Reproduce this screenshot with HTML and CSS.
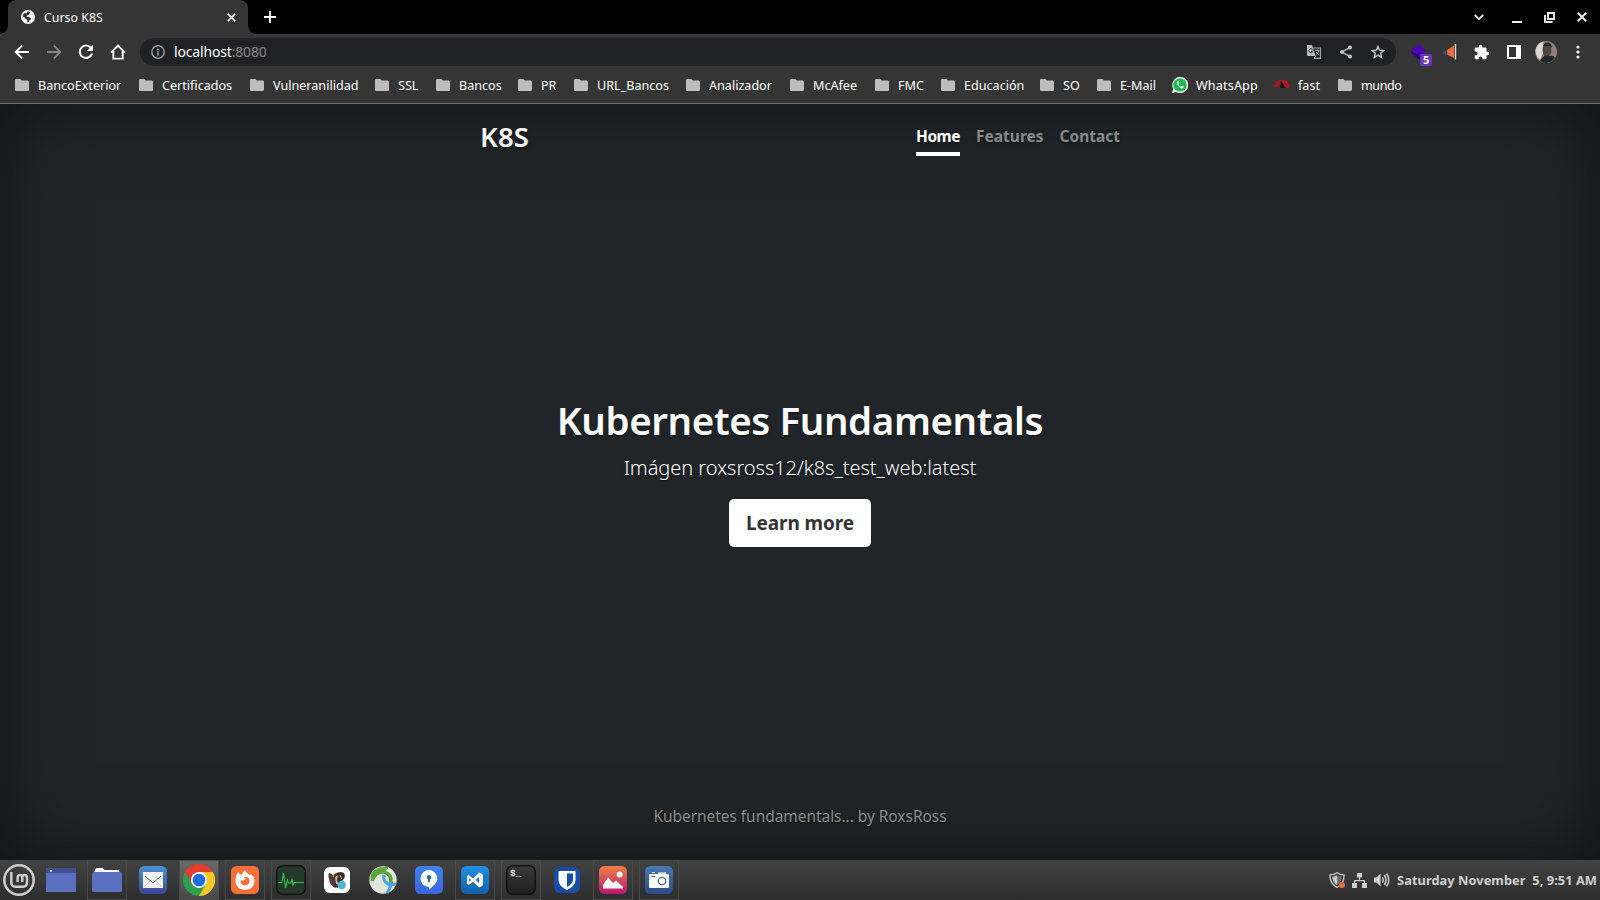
FILE: index.html
```html
<!DOCTYPE html>
<html lang="es">
<head>
<meta charset="utf-8">
<title>Curso K8S</title>
<link rel="stylesheet" href="styles.css">
</head>
<body>
<svg class="defs" width="0" height="0"><defs>
<symbol id="folder" viewBox="0 0 14 12"><path fill="#bdbdbd" d="M1.2 0H5.4L6.8 1.6H12.8Q14 1.6 14 2.8V10.8Q14 12 12.8 12H1.2Q0 12 0 10.8V1.2Q0 0 1.2 0Z"/></symbol>
<linearGradient id="g-mail" x2="0" y2="1"><stop offset="0" stop-color="#4b93cf"/><stop offset="1" stop-color="#3c4590"/></linearGradient>
<linearGradient id="g-code" x2="0" y2="1"><stop offset="0" stop-color="#2190e4"/><stop offset="1" stop-color="#1160a8"/></linearGradient>
<linearGradient id="g-img" x2="0" y2="1"><stop offset="0" stop-color="#f27f45"/><stop offset="1" stop-color="#b5176f"/></linearGradient>
<linearGradient id="g-cam" x2="0" y2="1"><stop offset="0" stop-color="#4a78b2"/><stop offset="1" stop-color="#2c4a86"/></linearGradient>
<linearGradient id="g-key" x2="0" y2="1"><stop offset="0" stop-color="#3b82f2"/><stop offset="1" stop-color="#3a66dc"/></linearGradient>
<linearGradient id="g-term" x2="0" y2="1"><stop offset="0" stop-color="#3a3a3a"/><stop offset="1" stop-color="#1f1f1f"/></linearGradient>
</defs></svg>
<div class="screen">
<header class="tabstrip">
  <div class="tab">
    <svg width="14" height="14" viewBox="0 0 14 14"><circle cx="7" cy="7" r="7" fill="#fff"/><path fill="#353535" d="M6.2 1.5Q9.600 1.200 9.400 3.200 7.600 3.400 7.600 5 5.600 5.200 5.400 6.800H8.200Q8.600 8.400 10.200 8.200 10.400 10.200 8.200 10.200 8.400 12 6.400 12.400 6 10.400 6.400 9.800 4 9.400 3.800 7.600L1.600 6.400Q2 3.400 4 2.400 4.400 3.800 5.800 3.200Z"/></svg>
    <span class="tab-title">Curso K8S</span>
    <svg width="9" height="9" viewBox="0 0 9 9"><path d="M.8.8 8.2 8.2M8.2.8.8 8.2" stroke="#eee" stroke-width="1.7"/></svg>
  </div>
  <svg class="plus" width="12" height="12" viewBox="0 0 12 12"><path d="M6 0V12M0 6H12" stroke="#fff" stroke-width="1.8"/></svg>
  <div class="wincontrols">
    <svg width="10" height="7" viewBox="0 0 10 7"><path d="M.8 1 5 5.2 9.2 1" fill="none" stroke="#eee" stroke-width="1.9"/></svg>
    <svg width="10" height="10" viewBox="0 0 10 10"><path d="M0 9H10" stroke="#eee" stroke-width="2"/></svg>
    <svg width="11" height="11" viewBox="0 0 11 11"><path d="M4 1H10V7H4ZM1 3V10H8.5" fill="none" stroke="#eee" stroke-width="1.9"/></svg>
    <svg width="10" height="10" viewBox="0 0 10 10"><path d="M.8.8 9.2 9.2M9.2.8.8 9.2" stroke="#eee" stroke-width="2"/></svg>
  </div>
</header>
<div class="toolbar">
  <div class="nav-icons">
    <svg width="16" height="16" viewBox="0 0 16 16"><path d="M15 8H2M8 1.7 1.7 8 8 14.3" fill="none" stroke="#fff" stroke-width="1.9"/></svg>
    <svg width="16" height="16" viewBox="0 0 16 16"><path d="M1 8H14M8 1.7 14.3 8 8 14.3" fill="none" stroke="#868686" stroke-width="1.9"/></svg>
    <svg width="16" height="16" viewBox="0 0 16 16"><path d="M13.6 5A6.2 6.2 0 1 0 14 9.4" fill="none" stroke="#fff" stroke-width="2"/><path d="M15 .8V7H8.8Z" fill="#fff"/></svg>
    <svg width="16" height="16" viewBox="0 0 16 16"><path d="M1 8.6 8 1.6 15 8.6M3.3 7V14.6H12.7V7" fill="none" stroke="#fff" stroke-width="1.9"/></svg>
  </div>
  <div class="omnibox">
    <svg width="14" height="14" viewBox="0 0 14 14"><circle cx="7" cy="7" r="6.2" fill="none" stroke="#9a9ca0" stroke-width="1.4"/><path d="M7 6.2V10.4M7 3.6V5" stroke="#9a9ca0" stroke-width="1.5"/></svg>
    <span class="url">localhost<span class="port">:8080</span></span>
    <div class="omni-actions">
      <svg width="14" height="14" viewBox="0 0 14 14"><path d="M6 3H13.4V13.4H7" fill="none" stroke="#aaa" stroke-width="1.1"/><path fill="#bbb" d="M0 0H5L8.6 11H1Q0 11 0 10Z"/><path d="M5.600 4.600A2 2 0 1 0 5.800 6.400H4" fill="none" stroke="#202124" stroke-width="1"/><path d="M8 5.500H12.600M10.400 4.300V5.500M11.800 5.800Q11 8.600 8.600 10M9 7 12.200 10.400M7 13.400 8.600 11" fill="none" stroke="#aaa" stroke-width="1"/></svg>
      <svg width="12" height="14" viewBox="0 0 12 14"><path d="M10 2.400 2 7 10 11.600" fill="none" stroke="#c4c4c4" stroke-width="1.3"/><g fill="#c4c4c4"><circle cx="10" cy="2.400" r="2"/><circle cx="2" cy="7" r="2"/><circle cx="10" cy="11.600" r="2"/></g></svg>
      <svg width="14" height="14" viewBox="0 0 14 14"><path d="M7 1.400 8.600 5.200 12.800 5.600 9.600 8.300 10.600 12.400 7 10.200 3.400 12.400 4.400 8.300 1.200 5.600 5.400 5.200Z" fill="none" stroke="#c8c8c8" stroke-width="1.4"/></svg>
    </div>
  </div>
  <div class="extensions">
    <svg width="23" height="30" viewBox="0 0 23 30"><path d="M0 14 8 7 15 13 8 20Z" fill="#4b07b5"/><path d="M0 14V16L9 23V19Z" fill="#2b0670"/><rect x="9" y="17" width="12" height="12" rx="1.500" fill="#6a35b8"/><text class="badge" x="12" y="27">5</text></svg>
    <svg class="ext-horn" width="14" height="18" viewBox="0 0 14 18"><path d="M0 7.500H3V12.500L2 13V11H0Z" fill="#2d5873"/><path d="M4 7 11 2.500V15L4 11.500Z" fill="#f0683c"/><path d="M12.500 1V16.500" stroke="#e8ddd2" stroke-width="1.4"/></svg>
    <svg class="ext-puzzle" width="16" height="16" viewBox="1 0 23 23"><path fill="#fff" d="M20.500 11H19V7a2 2 0 0 0-2-2h-4V3.500a2.500 2.500 0 0 0-5 0V5H4a2 2 0 0 0-2 2v3.800h1.500a2.700 2.700 0 0 1 0 5.400H2V20a2 2 0 0 0 2 2h3.800v-1.500a2.700 2.700 0 0 1 5.400 0V22H17a2 2 0 0 0 2-2v-4h1.500a2.500 2.500 0 0 0 0-5Z"/></svg>
    <svg class="ext-panel" width="14" height="14" viewBox="0 0 14 14"><path fill="#fff" fill-rule="evenodd" d="M0 0H14V14H0ZM2 2V12H9V2Z"/></svg>
    <svg class="ext-avatar" width="22" height="22" viewBox="0 0 22 22"><circle cx="11" cy="11" r="11" fill="#8c8078"/><path d="M2 5A11 11 0 0 1 8 .5V12L5 19A11 11 0 0 1 2 5Z" fill="#d8d8d6"/><ellipse cx="12" cy="9" rx="4.500" ry="7" fill="#54433d"/><path d="M8 6Q9 1 13 1.500 17 2 17 7L15 5H9Z" fill="#2c2828"/><path d="M5 20Q9 13 14 15 19 14 20 17 13 25 5 20Z" fill="#22272c"/></svg>
    <svg class="ext-menu" width="4" height="14" viewBox="0 0 4 14"><g fill="#fff"><circle cx="2" cy="2" r="1.600"/><circle cx="2" cy="7" r="1.600"/><circle cx="2" cy="12" r="1.600"/></g></svg>
  </div>
</div>
<nav class="bookmarks">
  <div class="bm"><svg><use href="#folder"/></svg><span>BancoExterior</span></div>
  <div class="bm"><svg><use href="#folder"/></svg><span>Certificados</span></div>
  <div class="bm"><svg><use href="#folder"/></svg><span>Vulneranilidad</span></div>
  <div class="bm"><svg><use href="#folder"/></svg><span>SSL</span></div>
  <div class="bm"><svg><use href="#folder"/></svg><span>Bancos</span></div>
  <div class="bm"><svg><use href="#folder"/></svg><span>PR</span></div>
  <div class="bm"><svg><use href="#folder"/></svg><span>URL_Bancos</span></div>
  <div class="bm"><svg><use href="#folder"/></svg><span>Analizador</span></div>
  <div class="bm"><svg><use href="#folder"/></svg><span>McAfee</span></div>
  <div class="bm"><svg><use href="#folder"/></svg><span>FMC</span></div>
  <div class="bm"><svg><use href="#folder"/></svg><span>Educación</span></div>
  <div class="bm"><svg><use href="#folder"/></svg><span>SO</span></div>
  <div class="bm"><svg><use href="#folder"/></svg><span>E-Mail</span></div>
  <div class="bm"><svg class="wide" viewBox="0 0 16 16"><path d="M0 16 1.200 11.800A8 8 0 1 1 4.200 14.900Z" fill="#fff"/><circle cx="8" cy="8" r="6.800" fill="#1fb954"/><path d="M5.400 4.200Q3.800 5.400 5.200 7.600 7 10.600 9.600 11.400 11.600 11.600 11.800 9.600L9.900 8.700 9 9.800Q7.200 9 6.300 7.200L7 6.300 6.300 4.300Z" fill="#fff"/></svg><span class="loose">WhatsApp</span></div>
  <div class="bm"><svg class="wide" viewBox="0 0 16 16"><path d="M0 10.500C1 0 15 0 16 10.500Q13 11.500 11.500 10L8 6 4.500 8.500Q3 11 0 10.500Z" fill="#b01525"/><path d="M6.500 4 9 6 10.500 11H6.500Z" fill="#111"/></svg><span>fast</span></div>
  <div class="bm"><svg><use href="#folder"/></svg><span class="tight">mundo</span></div>
</nav>
<section class="page">
  <div class="cover">
    <div class="masthead">
      <h3 class="brand">K8S</h3>
      <nav class="links"><a class="active">Home</a><a>Features</a><a>Contact</a></nav>
    </div>
    <main class="hero">
      <h1>Kubernetes Fundamentals</h1>
      <p class="lead">Imágen roxsross12/k8s_test_web:latest</p>
      <a class="btn">Learn more</a>
    </main>
    <footer class="foot">Kubernetes fundamentals... by RoxsRoss</footer>
  </div>
</section>
<footer class="taskbar">
  <div class="start"><svg width="32" height="32" viewBox="0 0 32 32"><circle cx="16" cy="16" r="14.700" fill="none" stroke="#cfcfcf" stroke-width="2.500"/><path d="M8.300 8V18.500Q8.300 22.700 12.500 22.700H20Q24 22.700 24 18.500V13.500Q24 11 21.600 11 19.300 11 19.300 13.500V18M19.300 13.500Q19.300 11 17 11 14.600 11 14.600 13.500V18" fill="none" stroke="#cfcfcf" stroke-width="2.400"/></svg></div>
  <div class="app"><svg width="30" height="24" viewBox="0 0 30 24"><rect width="30" height="24" fill="#5b6fc0"/><rect width="30" height="5" fill="#414f8d"/><circle cx="5" cy="3" r="1" fill="#fff"/></svg></div>
  <div class="app open"><svg width="30" height="26" viewBox="0 0 30 26"><path d="M2.500 6V4Q3.500 1 5 1H11L12.500 3H26.500Q27.500 3 27.500 5V7Z" fill="#fff"/><rect y="5" width="30" height="20" rx="1.500" fill="#5b6fc0"/></svg></div>
  <div class="app"><svg width="28" height="28" viewBox="0 0 28 28"><rect width="28" height="28" rx="5.500" fill="url(#g-mail)"/><rect x="4" y="6" width="20" height="16" fill="#f2f2ee"/><path d="M5 21 11.500 14.500M23 21 16.500 14.500" fill="none" stroke="#c4c4be" stroke-width=".8"/><path d="M6 10 14 17 22 10" fill="none" stroke="#77776f" stroke-width="1"/></svg></div>
  <div class="app open current"><svg width="32" height="32" viewBox="0 0 32 32"><circle cx="16" cy="16" r="16" fill="#2f9e4e"/><path d="M2.140 8A16 16 0 0 1 29.860 8H16L9 20Z" fill="#e33b2e"/><path d="M29.860 8A16 16 0 0 1 16 32L22.900 20 23 12 16 8Z" fill="#fcc822"/><circle cx="16" cy="16" r="8" fill="#fff"/><circle cx="16" cy="16" r="6.300" fill="#1d6fe0"/></svg></div>
  <div class="app open"><svg width="28" height="28" viewBox="0 0 28 28"><rect width="28" height="28" rx="5.500" fill="#fb7038"/><path d="M5 11Q5.500 8.500 7 6L9 8.500H11Q11.500 6 14 4.500 15 7 18.500 8.500L19.500 9 20 8Q24 11.500 23.500 16 22.500 23.500 14 24 5.500 23.500 4.500 16 4.300 13 5 11Z" fill="#fff"/><path d="M12.500 11Q16 10 18 12.500 19.500 15.500 17.500 18 14 20.500 11 18.500 9 17 9.500 14.500L13 14.500 15 12.500Z" fill="#fb7038"/></svg></div>
  <div class="app open"><svg width="30" height="30" viewBox="0 0 30 30"><rect x=".7" y=".7" width="28.600" height="28.600" rx="6" fill="#25392a" stroke="#111" stroke-width="1.400"/><path d="M2 17.500H6L7.500 8 9.500 23 11.500 15 12.500 18H15L16 13.500 17 20 18 17.500H28" fill="none" stroke="#35c04a" stroke-width="1.100"/></svg></div>
  <div class="app"><svg width="26" height="26" viewBox="0 0 26 26"><rect width="26" height="26" rx="6" fill="#fff"/><path d="M4.500 6.500Q8 5 10 11L12 21Q7 20 5.500 14Q4 9 4.500 6.500Z" fill="#4b403b"/><path d="M9.500 8Q14 4 19 5.500 21.500 6.500 20.500 11L18 14 14 21 11 20Z" fill="#3a2b26"/><path d="M11 10 14 8 13 13 14.500 18 12 17Z" fill="#c9b9a9"/><path d="M16 8 17.500 12" stroke="#b8a595" stroke-width="1.200"/><circle cx="17.700" cy="18" r="4.200" fill="#4eb5ca"/></svg></div>
  <div class="app"><svg width="28" height="28" viewBox="0 0 28 28"><circle cx="14" cy="14" r="13.700" fill="#e2e5df"/><path d="M3 15Q6 5 15 6 23 8 22 17" fill="none" stroke="#59a63a" stroke-width="3.600"/><path d="M3 6Q9 0 18 1.500L14 6Q8 5 1.500 13 1 9 3 6Z" fill="#59a63a"/><path d="M14 5Q17 2 19 1.500" stroke="#59a63a" stroke-width="2.500"/><path d="M27 18Q20 20 16.500 16 14 13 15 9" fill="none" stroke="#4ba6da" stroke-width="3.200"/><path d="M22 16Q22 22 18 27" fill="none" stroke="#4ba6da" stroke-width="3.200"/></svg></div>
  <div class="app"><svg width="28" height="28" viewBox="0 0 28 28"><rect width="28" height="28" rx="5.500" fill="url(#g-key)"/><path d="M14 4A8.500 8.500 0 0 1 18.500 19.500L14 24V21A8.500 8.500 0 0 1 14 4Z" fill="#fff"/><circle cx="14" cy="11.300" r="2.200" fill="#3568bd"/><path d="M13 12H15V16H13Z" fill="#3568bd"/></svg></div>
  <div class="app open"><svg width="28" height="28" viewBox="0 0 28 28"><rect width="28" height="28" rx="5.500" fill="url(#g-code)"/><path fill="#fff" fill-rule="evenodd" d="M6 10 7.500 9 12 12.500 18 6.500 22 8.500V19.500L18 21.500 12 15.800 7.500 19 6 18ZM8 12V16L10 14ZM18 11 14.500 14 18 17Z"/></svg></div>
  <div class="app open"><svg width="30" height="30" viewBox="0 0 30 30"><rect x=".7" y=".7" width="28.600" height="28.600" rx="6" fill="url(#g-term)" stroke="#111" stroke-width="1.400"/><text class="prompt" x="4" y="11">$_</text></svg></div>
  <div class="app"><svg width="26" height="26" viewBox="0 0 26 26"><rect width="26" height="26" rx="6" fill="#174da8"/><path d="M4.500 4H21.500V13Q21.500 19 13 23 4.500 19 4.500 13Z" fill="#fff"/><path d="M13 6.500H19V13Q18.500 17 13 20Z" fill="#174da8"/></svg></div>
  <div class="app open"><svg width="28" height="28" viewBox="0 0 28 28"><rect width="28" height="28" rx="5.500" fill="url(#g-img)"/><path d="M4 19 9 11.500 14 17 17 14.500 24 21V22.500H4Z" fill="#fff"/><circle cx="20.700" cy="8.500" r="3" fill="#fff"/></svg></div>
  <div class="app open"><svg width="28" height="28" viewBox="0 0 28 28"><rect width="28" height="28" rx="5.500" fill="url(#g-cam)"/><rect x="4" y="8" width="20" height="14" rx="1" fill="#fff"/><path d="M13 8.500V6.500H21V8.500ZM7 6H10V7H7Z" fill="#fff"/><circle cx="17" cy="15" r="3.700" fill="none" stroke="#3b629f" stroke-width="1.200"/><path d="M6.500 10.500H10" stroke="#3b629f"/></svg></div>
  <div class="tray">
    <svg width="16" height="16" viewBox="0 0 16 16"><path d="M8 .7Q11 2.800 15 2.800 15.500 11.500 8 15.300 .5 11.500 1 2.800 5 2.800 8 .7Z" fill="none" stroke="#c8c8c8" stroke-width="1.300"/><path d="M8 3.200V13Q3.200 10 3.300 4.700 6 4.500 8 3.200Z" fill="#c8c8c8"/><path d="M8 3.200Q10 4.500 12.700 4.700 12.500 10 8 13Z" fill="#707070"/><circle cx="13" cy="13" r="3" fill="#f0693a"/></svg>
    <svg width="15" height="15" viewBox="0 0 15 15"><path d="M5 0H10V4.500H8V7H13V10H15V15H10V10H11.800V8.300H3.200V10H5V15H0V10H2V7H7V4.500H5Z" fill="#cfcfcf"/></svg>
    <svg width="16" height="14" viewBox="0 0 16 14"><path d="M0 4.500H2.500L6.500 .5V13.500L2.500 9.500H0Z" fill="#cfcfcf"/><path d="M8.300 4Q10 7 8.300 10M10.400 2Q13.400 7 10.400 12M12.600 .5Q17 7 12.600 13.500" fill="none" stroke="#cfcfcf" stroke-width="1.500"/></svg>
    <span class="clock">Saturday November&nbsp; 5, 9:51 AM</span>
  </div>
</footer>
</div>
</body>
</html>
```
FILE: styles.css
```css
* { box-sizing: border-box; }
body { margin: 0; background: #000; font-family: "Noto Sans", "Open Sans", sans-serif; color: #fff; }
svg { display: block; flex: none; }
.defs { position: absolute; }
h1, h3, p { margin: 0; }

.screen { width: 1600px; height: 900px; display: flex; flex-direction: column; overflow: hidden; }

/* browser chrome */
.tabstrip { height: 34px; background: #000; display: flex; align-items: center; padding-left: 8px; }
.tab { position: relative; width: 240px; height: 34px; background: #353535; border-radius: 8px 8px 0 0; display: flex; align-items: center; padding: 0 12px 0 13px; }
.tab::before, .tab::after { content: ""; position: absolute; bottom: 0; width: 8px; height: 8px; }
.tab::before { left: -8px; background: radial-gradient(circle at 0 0, transparent 7.5px, #353535 8px); }
.tab::after { right: -8px; background: radial-gradient(circle at 100% 0, transparent 7.5px, #353535 8px); }
.tab-title { font-size: 12.4px; margin: 0 auto 0 9px; }
.plus { margin-left: 16px; }
.wincontrols { margin: 0 13px 0 auto; display: flex; align-items: center; }
.wincontrols svg + svg { margin-left: 28px; }
.wincontrols svg:nth-child(2) { margin-top: 2px; }
.wincontrols svg:nth-child(3) { margin-left: 22px; }
.wincontrols svg:nth-child(4) { margin-left: 22px; }

.toolbar { height: 35px; background: #353535; display: flex; align-items: center; padding-top: 1px; }
.nav-icons { display: flex; gap: 16px; margin-left: 14px; }
.omnibox { margin-left: 14px; width: 1256px; height: 28px; border-radius: 14px; background: #202124; display: flex; align-items: center; padding: 0 11px; }
.url { font-size: 14px; margin-left: 9px; padding-bottom: 2px; letter-spacing: -.17px; }
.port { color: #888; }
.omni-actions { margin-left: auto; display: flex; gap: 19px; }
.extensions { display: flex; align-items: center; margin-left: 15px; }
.ext-horn { margin-left: 9px; }
.ext-puzzle { margin-left: 17px; }
.ext-panel { margin-left: 17px; }
.ext-avatar { margin-left: 14px; }
.ext-menu { margin-left: 19px; }
.badge { font: 700 11px "Noto Sans", sans-serif; fill: #fff; }

.bookmarks { height: 35px; background: #353535; border-bottom: 1px solid #6a6a6a; display: grid; grid-template-columns: 124px 111px 125px 61px 82px 56px 112px 104px 85px 66px 99px 57px 75px 102px 64px 60px; padding: 0 0 2px 15px; font-size: 12.6px; }
.bm { display: flex; align-items: center; white-space: nowrap; }
.bm svg { width: 14px; height: 12px; margin-right: 9px; }
.bm svg.wide { width: 16px; height: 16px; margin-right: 8px; }
.bm .loose { letter-spacing: .15px; }
.bm .tight { letter-spacing: -.45px; }

/* web page */
.page { height: 756px; background: #212529; box-shadow: inset 0 0 80px rgba(0,0,0,.5); display: flex; justify-content: center; text-shadow: 0 1px 2px rgba(0,0,0,.5); }
.cover { width: 672px; padding: 16px 16px 32px; display: flex; flex-direction: column; }
.masthead { display: flex; justify-content: space-between; height: 36px; }
.brand { font-size: 27.5px; line-height: 34px; font-weight: 600; letter-spacing: .1px; }
.links { display: flex; gap: 16px; font-weight: 700; font-size: 15.5px; line-height: 24px; color: rgba(255,255,255,.5); }
.links a { padding: 4px 0; border-bottom: 4px solid transparent; }
.links .active { width: 44px; letter-spacing: -.5px; color: #fff; border-color: #fff; }
.hero { text-align: center; margin-top: 240px; }
.hero h1 { font-size: 38.5px; line-height: 48px; font-weight: 600; white-space: nowrap; letter-spacing: -.4px; }
.lead { margin-top: 9px; font-size: 20px; line-height: 30px; font-weight: 300; letter-spacing: -.05px; }
.btn { display: block; width: 142px; margin: 16px auto 0; font-weight: 700; font-size: 19px; line-height: 48px; height: 48px; border-radius: 5px; background: #fff; color: #333; text-shadow: none; letter-spacing: -.08px; }
.foot { margin-top: auto; text-align: center; font-size: 15.5px; line-height: 24px; letter-spacing: -.05px; color: rgba(255,255,255,.5); }

/* desktop panel */
.taskbar { height: 40px; background: linear-gradient(#424242, #2d2d2d); display: flex; align-items: center; gap: 6px; }
.start { width: 35px; padding-left: 3px; }
.app { width: 40px; height: 40px; display: flex; align-items: center; justify-content: center; border: 1px solid transparent; }
.app.open { border-color: #4a4a4a; }
.app.current { background: linear-gradient(#696969, #484848); }
.prompt { font: 700 9.5px "Liberation Mono", monospace; fill: #e4e4e4; }
.tray { margin-left: auto; padding-right: 3px; display: flex; align-items: center; gap: 7px; }
.clock { font-size: 12.8px; font-weight: 700; letter-spacing: .06px; color: #cfcfcf; white-space: nowrap; }
```
